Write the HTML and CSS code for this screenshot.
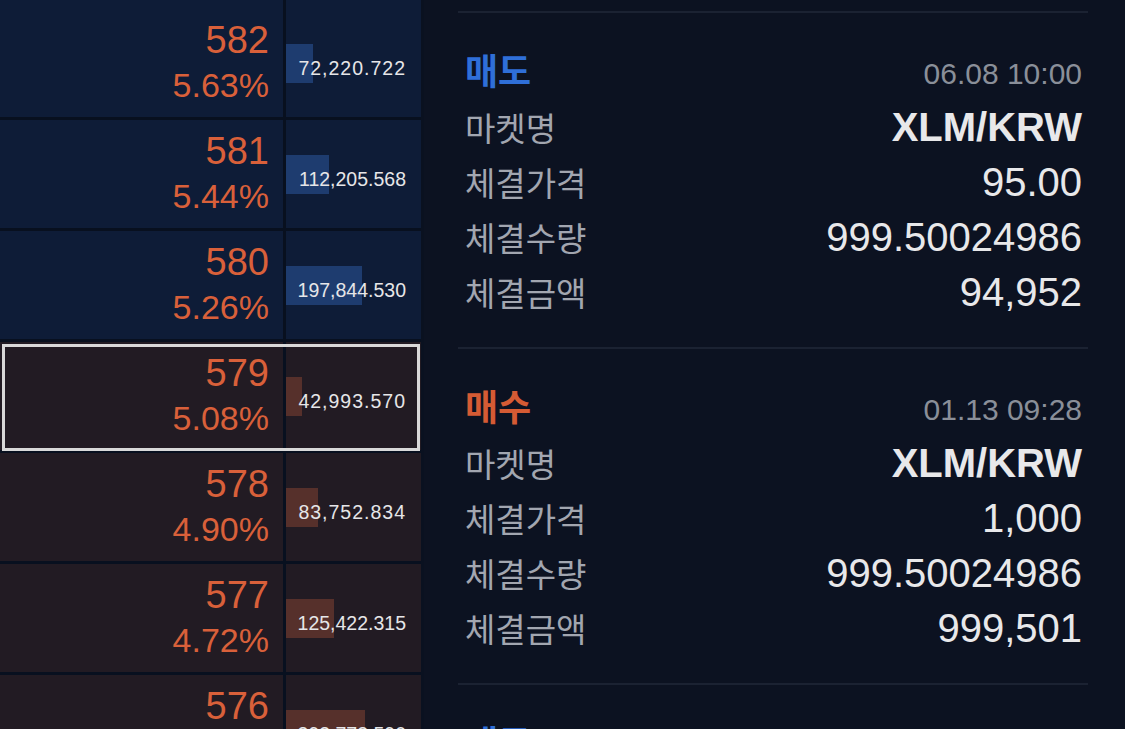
FILE: index.html
```html
<!DOCTYPE html>
<html lang="ko">
<head>
<meta charset="utf-8">
<title>체결</title>
<link rel="stylesheet" href="styles.css">
</head>
<body>
<div class="screen">
  <div class="book">
    <div class="row ask stub"><div class="price-cell"></div><div class="qty-cell"></div></div>
    <div class="row ask">
      <div class="price-cell"><span class="price">582</span><span class="pct">5.63%</span></div>
      <div class="qty-cell"><span class="bar" style="width:27px"></span><span class="qty short">72,220.722</span></div>
    </div>
    <div class="row ask">
      <div class="price-cell"><span class="price">581</span><span class="pct">5.44%</span></div>
      <div class="qty-cell"><span class="bar" style="width:43px"></span><span class="qty">112,205.568</span></div>
    </div>
    <div class="row ask">
      <div class="price-cell"><span class="price">580</span><span class="pct">5.26%</span></div>
      <div class="qty-cell"><span class="bar" style="width:76px"></span><span class="qty">197,844.530</span></div>
    </div>
    <div class="row bid selected">
      <div class="price-cell"><span class="price">579</span><span class="pct">5.08%</span></div>
      <div class="qty-cell"><span class="bar" style="width:16px"></span><span class="qty short">42,993.570</span></div>
    </div>
    <div class="row bid">
      <div class="price-cell"><span class="price">578</span><span class="pct">4.90%</span></div>
      <div class="qty-cell"><span class="bar" style="width:32px"></span><span class="qty short">83,752.834</span></div>
    </div>
    <div class="row bid">
      <div class="price-cell"><span class="price">577</span><span class="pct">4.72%</span></div>
      <div class="qty-cell"><span class="bar" style="width:48px"></span><span class="qty">125,422.315</span></div>
    </div>
    <div class="row bid">
      <div class="price-cell"><span class="price">576</span><span class="pct">4.54%</span></div>
      <div class="qty-cell"><span class="bar" style="width:79px"></span><span class="qty">393,773.590</span></div>
    </div>
  </div>

  <div class="fills">
    <section class="fill">
      <div class="fill-head"><span class="side sell">매도</span><span class="time">06.08 10:00</span></div>
      <div class="fill-row"><span class="label">마켓명</span><span class="value strong">XLM/KRW</span></div>
      <div class="fill-row"><span class="label">체결가격</span><span class="value">95.00</span></div>
      <div class="fill-row"><span class="label">체결수량</span><span class="value">999.50024986</span></div>
      <div class="fill-row"><span class="label">체결금액</span><span class="value">94,952</span></div>
    </section>
    <section class="fill">
      <div class="fill-head"><span class="side buy">매수</span><span class="time">01.13 09:28</span></div>
      <div class="fill-row"><span class="label">마켓명</span><span class="value strong">XLM/KRW</span></div>
      <div class="fill-row"><span class="label">체결가격</span><span class="value">1,000</span></div>
      <div class="fill-row"><span class="label">체결수량</span><span class="value">999.50024986</span></div>
      <div class="fill-row"><span class="label">체결금액</span><span class="value">999,501</span></div>
    </section>
    <section class="fill">
      <div class="fill-head"><span class="side sell">매도</span><span class="time">12.27 14:05</span></div>
    </section>
  </div>
</div>
</body>
</html>
```

FILE: styles.css
```css
* { box-sizing: border-box; }

html, body {
  margin: 0;
  padding: 0;
  width: 1125px;
  height: 729px;
  overflow: hidden;
  background: #0c1221;
  font-family: "Liberation Sans", "Noto Sans CJK KR", sans-serif;
}

.screen {
  display: flex;
  width: 1125px;
  height: 729px;
  overflow: hidden;
}

/* ---------- order book ---------- */
.book {
  flex: none;
  width: 424px;
  height: 729px;
  display: flex;
  flex-direction: column;
  overflow: hidden;
  border-right: 3px solid #0a1120;
}

.row {
  flex: none;
  display: grid;
  grid-template-columns: 283px 135px;
  column-gap: 3px;
  height: 111px;
  border-bottom: 3px solid #08101f;
  background: #08101f;
}

.row.stub { height: 9px; }

.ask .price-cell, .ask .qty-cell { background: #0e1c37; }
.bid .price-cell, .bid .qty-cell { background: #221b23; }

.price-cell {
  display: flex;
  flex-direction: column;
  align-items: flex-end;
  padding: 11px 14px 0 0;
  color: #d9603a;
}

.price { font-size: 38px; line-height: 40px; }
.pct { font-size: 34px; line-height: 50px; }

.qty-cell {
  display: grid;
  align-items: center;
}

.bar {
  grid-area: 1 / 1;
  justify-self: start;
  height: 39px;
}
.ask .bar { background: #1e3c6f; }
.bid .bar { background: #56302b; }

.qty {
  grid-area: 1 / 1;
  justify-self: end;
  padding: 11px 15px 0 0;
  font-size: 19.5px;
  color: #e6e6e8;
  white-space: nowrap;
}
.qty.short { letter-spacing: 1px; }

.row.selected { position: relative; }
.row.selected::after {
  content: "";
  position: absolute;
  left: 2px;
  right: 1px;
  top: 2px;
  bottom: -1px;
  border: 3px solid #d9d9d9;
}

/* ---------- fills ---------- */
.fills {
  flex: 1;
  padding: 11px 37px 0 34px;
  overflow: hidden;
}

.fill {
  border-top: 2px solid #1b2232;
  padding: 30px 0 28px;
}

.fill-head {
  height: 56px;
  display: flex;
  justify-content: space-between;
  align-items: center;
  padding: 0 6px 0 7px;
}

.side {
  font-family: "Noto Sans CJK KR", sans-serif;
  font-weight: 700;
  font-size: 36px;
  line-height: 40px;
  padding-bottom: 4px;
}
.side.sell { color: #2f6fd8; }
.side.buy { color: #d55b34; }

.time {
  font-size: 30px;
  color: #8a8f99;
  padding-top: 5px;
}

.fill-row {
  height: 55px;
  display: flex;
  justify-content: space-between;
  align-items: center;
  padding: 0 6px 0 7px;
}

.label {
  font-family: "Noto Sans CJK KR", sans-serif;
  font-size: 33px;
  line-height: 40px;
  color: #a2a6b0;
}

.value {
  font-size: 40px;
  line-height: 46px;
  color: #e8e8ea;
}
.value.strong { font-weight: 700; }
```
